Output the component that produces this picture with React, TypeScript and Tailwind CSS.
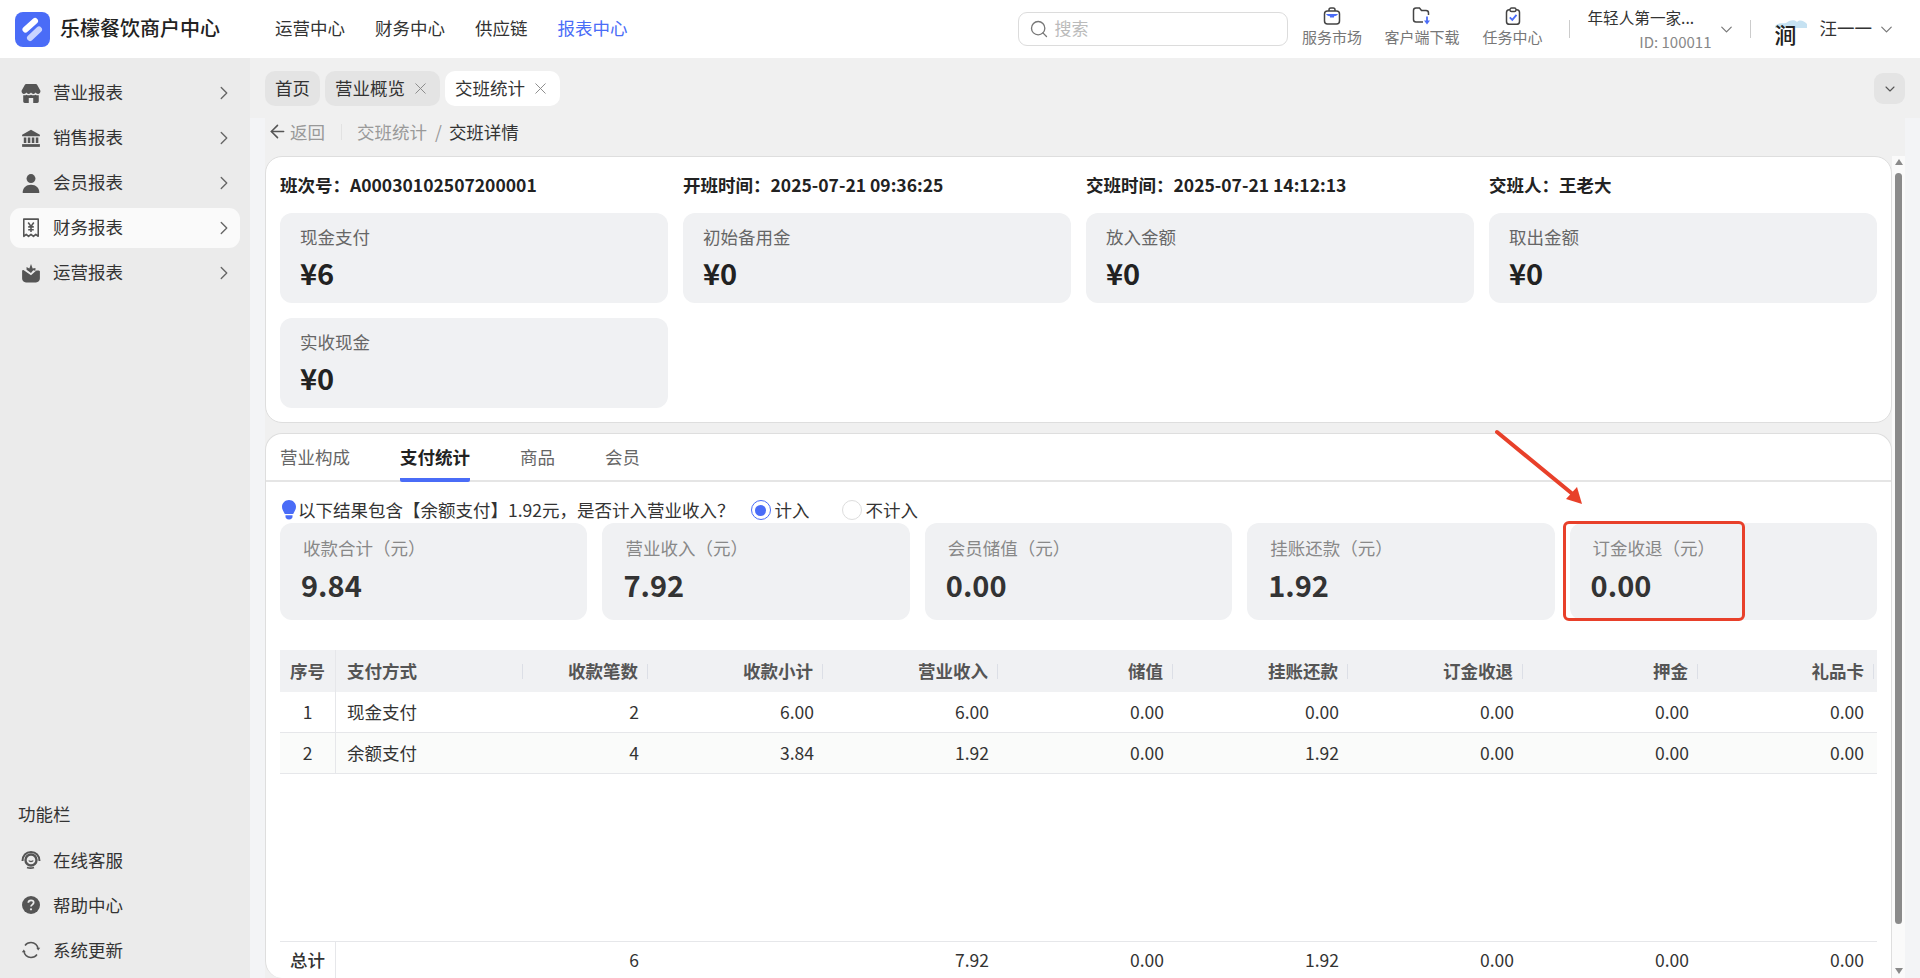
import { ArrowLeft, ChevronDown, ChevronRight, Search, X } from 'lucide-react';
import type { ReactNode } from 'react';

const BLUE = '#4a6cf7';

function Logo() {
  return (
    <svg viewBox="0 0 35 35" className="w-[35px] h-[35px]">
      <rect width="35" height="35" rx="8" fill={BLUE} />
      <path d="M15 26 L24 17.5" stroke="#c9d4ff" strokeWidth="6" strokeLinecap="round" />
      <path d="M10.5 17.5 L20 9" stroke="#fff" strokeWidth="6" strokeLinecap="round" />
    </svg>
  );
}

function StoreIcon() {
  return (
    <svg viewBox="0 0 18 18" className="w-[20px] h-[20px]" fill="#555">
      <path d="M5 1h8c1 0 1.6.5 2 1.4L17.5 7c.2 1.7-.9 2.8-2.2 2.8-1 0-1.7-.5-2.1-1.2-.5.7-1.2 1.2-2.1 1.2S9.500 9.300 9 8.600c-.5.7-1.2 1.2-2.1 1.2S5.300 9.300 4.800 8.600c-.4.7-1.1 1.2-2.1 1.2C1.400 9.800.3 8.700.5 7L3 2.400C3.400 1.500 4 1 5 1z" />
      <path d="M2 11c1.200.3 2.300 0 3-.5.9.6 2.800.7 4 0 1.200.7 3.100.6 4 0 .7.5 1.800.8 3 .5v5.500c0 .8-.6 1.500-1.400 1.500H3.400C2.600 18 2 17.300 2 16.500V11zm5 2.500V18h4v-4.500H7z" fillRule="evenodd" />
    </svg>
  );
}

function BankIcon() {
  return (
    <svg viewBox="0 0 18 18" className="w-[20px] h-[20px]" fill="#555">
      <path d="M9 1.5 17 6v1.500H1V6l8-4.500z" />
      <path d="M2.500 8.500h2.300v5H2.500zM6.100 8.500h2.300v5H6.100zM9.700 8.500h2.300v5H9.700zM13.300 8.500h2.300v5h-2.300z" />
      <path d="M1 14.500h16V17H1z" />
    </svg>
  );
}

function UserIcon() {
  return (
    <svg viewBox="0 0 18 18" className="w-[20px] h-[20px]" fill="#555">
      <circle cx="9" cy="5" r="4" />
      <path d="M1.500 17.500c0-4 3-7 7.500-7s7.500 3 7.500 7c0 .3-.2.5-.5.5H2c-.3 0-.5-.2-.5-.5z" />
    </svg>
  );
}

function ReceiptIcon() {
  return (
    <svg viewBox="0 0 18 18" className="w-[20px] h-[20px]" fill="none" stroke="#555" strokeWidth="1.4">
      <path d="M2.500 1h13v15.500l-2.200-1.800-2.100 1.800L9 14.700l-2.200 1.800-2.100-1.800-2.200 1.800V1z" strokeLinejoin="round" />
      <path d="M6.500 4 9 7.500 11.500 4M9 7.500V12.500M6.500 8h5M6.500 10.500h5" />
    </svg>
  );
}

function BoxIcon() {
  return (
    <svg viewBox="0 0 18 18" className="w-[20px] h-[20px]" fill="#555">
      <path d="M9 1 7.500 5 5 3.500V6l4 3 2-2.500 2 .5V4.500L10.500 5 9 1z" />
      <path d="M1 7.500c0-.8.7-1.300 1.500-1L9 11l4.500-4c.8-.5 3.500-.5 3.500.5V14c0 2-1.500 3.500-3.500 3.500h-9C2.500 17.500 1 16 1 14V7.500z" />
    </svg>
  );
}

function ServiceIcon() {
  return (
    <svg viewBox="0 0 20 20" className="w-[20px] h-[20px]" fill="none" stroke="#555">
      <path d="M1.500 11C1.500 5.500 5 2 10 2s8.500 3.500 8.500 9" strokeWidth="2" />
      <circle cx="10" cy="10" r="5.5" strokeWidth="2.4" />
      <path d="M7.800 10.500c.8 1.300 3.600 1.300 4.400 0" strokeWidth="1.3" />
      <path d="M6 17.500c2 .8 5 .8 7 0" strokeWidth="1.8" />
    </svg>
  );
}

function HelpIcon() {
  return (
    <svg viewBox="0 0 20 20" className="w-[20px] h-[20px]">
      <circle cx="10" cy="10" r="9" fill="#555" />
      <path d="M7.300 7.800C7.400 6.200 8.500 5.300 10 5.300c1.600 0 2.700 1 2.700 2.300 0 2-2.700 2-2.700 4" fill="none" stroke="#ebebeb" strokeWidth="1.7" />
      <circle cx="10" cy="14.3" r="1.1" fill="#ebebeb" />
    </svg>
  );
}

function RefreshIcon() {
  return (
    <svg viewBox="0 0 20 20" className="w-[20px] h-[20px]" fill="none" stroke="#555" strokeWidth="1.4">
      <path d="M4 5.500C5.500 3.300 7.500 2.500 10 2.500c3.800 0 6.800 2.800 7.200 6.500" />
      <path d="M16 14.500c-1.500 2.200-3.500 3-6 3-3.800 0-6.800-2.800-7.200-6.500" />
      <path d="M15.200 7.800h4l-2 2.600zM.8 12.200h4l-2-2.600z" fill="#555" stroke="none" />
    </svg>
  );
}

function MarketIcon() {
  return (
    <svg viewBox="0 0 18 18" className="w-[18px] h-[18px]" fill="none">
      <rect x="1.5" y="4" width="15" height="13" rx="3" stroke="#444" strokeWidth="1.5" />
      <path d="M6 4V2.800C6 1.800 6.800 1 7.800 1h2.400c1 0 1.800.8 1.800 1.800V4" stroke="#444" strokeWidth="1.5" />
      <path d="M3 7h12c-.5 1-2 2-4 2.300V10.500H7V9.300C5 9 3.500 8 3 7z" fill={BLUE} />
    </svg>
  );
}

function DownloadIcon() {
  return (
    <svg viewBox="0 0 20 18" className="w-[20px] h-[18px]" fill="none">
      <path d="M11 15H4c-1.400 0-2.500-1-2.500-2.500v-9C1.500 2 2.500 1 4 1h3.500l2 2.500H14c1.400 0 2.500 1 2.500 2.500v2" stroke="#444" strokeWidth="1.5" />
      <path d="M15 9.500V15" stroke={BLUE} strokeWidth="1.8" />
      <path d="M12 13.500h6L15 17.500z" fill={BLUE} />
    </svg>
  );
}

function TaskIcon() {
  return (
    <svg viewBox="0 0 18 18" className="w-[18px] h-[18px]" fill="none">
      <rect x="2.5" y="2.8" width="13" height="14.500" rx="2.8" stroke="#444" strokeWidth="1.5" />
      <rect x="6" y="1" width="6" height="3.5" rx="1.5" fill="#fff" stroke="#444" strokeWidth="1.4" />
      <path d="M5.800 10.300 8.300 12.800 12.500 7.800" stroke={BLUE} strokeWidth="1.8" />
    </svg>
  );
}

function Bulb() {
  return (
    <svg viewBox="0 0 14 20" className="w-[14px] h-[20px]" fill={BLUE}>
      <path d="M7 0c3.700 0 7 2.800 7 6.800 0 3-1.700 4.700-2.800 7.200H2.800C1.700 11.500 0 9.800 0 6.800 0 2.800 3.300 0 7 0z" />
      <path d="M3.500 15.300h7v1.500c0 1.300-1 2.700-3.500 2.700S3.500 18.100 3.500 16.800z" />
    </svg>
  );
}

const topTools = [
  { icon: <MarketIcon />, label: '服务市场', cls: 'ml-[14px] w-[61px]' },
  { icon: <DownloadIcon />, label: '客户端下载', cls: 'ml-[22px] w-[75px]' },
  { icon: <TaskIcon />, label: '任务中心', cls: 'ml-[23px] w-[60px]' },
];

const menu = [
  { icon: <StoreIcon />, label: '营业报表' },
  { icon: <BankIcon />, label: '销售报表' },
  { icon: <UserIcon />, label: '会员报表' },
  { icon: <ReceiptIcon />, label: '财务报表', active: true },
  { icon: <BoxIcon />, label: '运营报表' },
];

const tools = [
  { icon: <ServiceIcon />, label: '在线客服' },
  { icon: <HelpIcon />, label: '帮助中心' },
  { icon: <RefreshIcon />, label: '系统更新' },
];

function Header() {
  return (
    <header className="h-[58px] shrink-0 bg-white flex items-center pl-[15px] pr-[24px]">
      <Logo />
      <span className="ml-[10px] mb-[2px] text-[20px] font-medium text-[#222] whitespace-nowrap">乐檬餐饮商户中心</span>
      <nav className="ml-[55px] mb-[2px] flex gap-[30px] text-[17.5px] text-[#333]">
        <span>运营中心</span>
        <span>财务中心</span>
        <span>供应链</span>
        <span className="text-[#4a6cf7]">报表中心</span>
      </nav>
      <div className="ml-auto flex items-center">
        <div className="w-[270px] h-[34px] rounded-[9px] border border-[#dcdcdc] flex items-center pl-[10px] gap-[6px]">
          <Search size={20} strokeWidth={1.6} className="text-[#777]" />
          <span className="mb-[2px] text-[17px] text-[#bbb]">搜索</span>
        </div>
        {topTools.map(t => (
          <div key={t.label} className={`${t.cls} mb-[5px] flex flex-col items-center`}>
            <div className="h-[20px] flex items-center">{t.icon}</div>
            <span className="text-[15px] leading-[22px] text-[#777] whitespace-nowrap">{t.label}</span>
          </div>
        ))}
        <div className="ml-[26px] w-px h-[18px] bg-[#ccc]" />
        <div className="ml-[18px] w-[124px] flex flex-col">
          <span className="text-[15.6px] leading-[22px] text-[#333] whitespace-nowrap">年轻人第一家...</span>
          <span className="mt-[3px] text-[15px] leading-[22px] text-[#888] text-right">ID: 100011</span>
        </div>
        <ChevronDown size={19} strokeWidth={1.5} className="ml-[5px] text-[#777]" />
        <div className="ml-[14px] w-px h-[18px] bg-[#ccc]" />
        <div className="ml-[21px] w-[38px] h-[38px] rounded-full relative flex items-end pl-[3px] pb-[3px]">
          <svg viewBox="0 0 38 12" className="absolute left-0 top-[7px] w-[38px] h-[12px]">
            <path d="M3 9c3-4 8-2 11-3 3-3 9-4 11-1 3-3 7-1 10 2v4H3z" fill="#c6e2f2" />
          </svg>
          <span className="relative text-[22px] leading-[24px] font-medium text-[#222]">涧</span>
        </div>
        <span className="ml-[10px] mb-[2px] text-[17.5px] text-[#333] whitespace-nowrap">汪一一</span>
        <ChevronDown size={19} strokeWidth={1.5} className="ml-[5px] text-[#777]" />
      </div>
    </header>
  );
}

function Sidebar() {
  return (
    <aside className="w-[250px] shrink-0 bg-[#ebebeb] flex flex-col justify-between pt-[15px] pb-[8px] text-[17.5px] text-[#333]">
      <div className="flex flex-col gap-[5px] px-[10px]">
        {menu.map(m => (
          <div key={m.label} className={`h-[40px] rounded-[11px] flex items-center pl-[11px] pr-[5px] ${m.active ? 'bg-[#fafafa]' : ''}`}>
            <span className="w-[20px] flex justify-center">{m.icon}</span>
            <span className="ml-[12px] mb-[2px]">{m.label}</span>
            <ChevronRight size={22} strokeWidth={1.5} className="ml-auto text-[#666]" />
          </div>
        ))}
      </div>
      <div className="px-[18px]">
        <div className="h-[32px] leading-[32px]">功能栏</div>
        <div className="mt-[10px] flex flex-col gap-[5px]">
          {tools.map(t => (
            <div key={t.label} className="h-[40px] flex items-center">
              <span className="ml-[3px]">{t.icon}</span>
              <span className="ml-[12px]">{t.label}</span>
            </div>
          ))}
        </div>
      </div>
    </aside>
  );
}

function Tab({ label, active, closable }: { label: string; active?: boolean; closable?: boolean }) {
  return (
    <div className={`h-[35px] rounded-[10px] px-[10px] flex items-center gap-[6px] text-[17.5px] text-[#333] ${active ? 'bg-white' : 'bg-[#e4e4e4]'}`}>
      {label}
      {closable && <X size={19} strokeWidth={1.2} className="text-[#888]" />}
    </div>
  );
}

function InfoCard({ label, value }: { label: string; value: string }) {
  return (
    <div className="h-[90px] rounded-[12px] bg-[#f0f1f3] pl-[20px] pt-[12px]">
      <div className="text-[17.5px] leading-[24px] text-[#666]">{label}</div>
      <div className="mt-[5px] text-[29px] leading-[36px] font-bold text-[#222]">{value}</div>
    </div>
  );
}

function PayCard({ label, value }: { label: string; value: string }) {
  return (
    <div className="h-[97px] rounded-[12px] bg-[#f0f1f3] pt-[13px]">
      <div className="ml-[23px] text-[17.5px] leading-[24px] text-[#888] whitespace-nowrap">{label}</div>
      <div className="ml-[21px] mt-[6px] text-[29px] leading-[36px] font-bold text-[#333]">{value}</div>
    </div>
  );
}

function Radio({ label, checked }: { label: string; checked?: boolean }) {
  return (
    <div className="flex items-center gap-[4px]">
      <span className={`w-[20px] h-[20px] rounded-full border flex items-center justify-center ${checked ? 'border-[#4a6cf7]' : 'border-[#ddd]'}`}>
        {checked && <span className="w-[11px] h-[11px] rounded-full bg-[#4a6cf7]" />}
      </span>
      {label}
    </div>
  );
}

const gridCols = 'grid grid-cols-[56px_187px_125px_repeat(6,175px)_179px]';
const headers = ['收款笔数', '收款小计', '营业收入', '储值', '挂账还款', '订金收退', '押金', '礼品卡'];

function HeadCell({ children, last, left }: { children: ReactNode; last?: boolean; left?: boolean }) {
  return (
    <div className={`flex items-center ${left ? 'justify-between pl-[11px]' : 'justify-end'} ${last ? 'pr-[3px]' : ''}`}>
      <span className="font-bold text-[#555]">{children}</span>
      <span className={`${left ? '' : 'ml-[9px]'} w-px h-[15px] bg-[#dcdfe6]`} />
    </div>
  );
}

function Row({ index, name, cells, cls }: { index: string; name: string; cells: string[]; cls?: string }) {
  return (
    <div className={`${gridCols} ${cls ?? ''} h-[41px] border-b border-[#e6e7ea] text-[17.5px] text-[#333]`}>
      <div className="flex items-center justify-center border-r border-[#e6e7ea]">{index}</div>
      <div className="flex items-center pl-[11px]">{name}</div>
      {cells.map((c, i) => (
        <div key={i} className={`flex items-center justify-end ${i === cells.length - 1 ? 'pr-[13px]' : 'pr-[9px]'}`}>{c}</div>
      ))}
    </div>
  );
}

function PayTable() {
  return (
    <div className="mt-[30px] flex-1 min-h-0 flex flex-col">
      <div className={`${gridCols} h-[42px] shrink-0 bg-[#f0f1f3] text-[17.5px]`}>
        <div className="flex items-center justify-center font-bold text-[#555] border-r border-[#e6e7ea]">序号</div>
        <HeadCell left>支付方式</HeadCell>
        {headers.map((h, i) => (
          <HeadCell key={h} last={i === headers.length - 1}>{h}</HeadCell>
        ))}
      </div>
      <Row index="1" name="现金支付" cells={['2', '6.00', '6.00', '0.00', '0.00', '0.00', '0.00', '0.00']} />
      <Row index="2" name="余额支付" cells={['4', '3.84', '1.92', '0.00', '1.92', '0.00', '0.00', '0.00']} cls="bg-[#fafbfa]" />
      <div className="flex-1" />
      <div className={`${gridCols} h-[37px] shrink-0 border-t border-[#e6e7ea] text-[17.5px] text-[#333]`}>
        <div className="flex items-center justify-center font-medium border-r border-[#e6e7ea]">总计</div>
        <div />
        {['6', '', '7.92', '0.00', '1.92', '0.00', '0.00', '0.00'].map((c, i) => (
          <div key={i} className={`flex items-center justify-end ${i === 7 ? 'pr-[13px]' : 'pr-[9px]'}`}>{c}</div>
        ))}
      </div>
    </div>
  );
}

function Scrollbar() {
  return (
    <div className="w-[13px] shrink-0 bg-[#fafafa] relative flex flex-col items-center">
      <span className="mt-[3px] w-0 h-0 border-x-[4px] border-x-transparent border-b-[6px] border-b-[#8a8a8a]" />
      <div className="mt-[8px] w-[7px] h-[751px] rounded-[4px] bg-[#8a8a8a]" />
      <span className="mt-auto mb-[4px] w-0 h-0 border-x-[4px] border-x-transparent border-t-[6px] border-t-[#8a8a8a]" />
    </div>
  );
}

function Overlay() {
  return (
    <>
      <svg viewBox="0 0 100 85" className="absolute left-[1490px] top-[425px] w-[100px] h-[85px]">
        <path d="M7 7 L85 71" stroke="#e8402a" strokeWidth="4" strokeLinecap="round" />
        <path d="M92 79 L76 74 L87 62z" fill="#e8402a" />
      </svg>
      <div className="absolute left-[1563px] top-[521px] w-[182px] h-[100px] border-[3.5px] border-[#e8402a] rounded-[6px]" />
    </>
  );
}

export default function App() {
  return (
    <div className="relative w-[1920px] h-[978px] overflow-hidden flex flex-col bg-[#f0f0f0] font-['Noto_Sans_CJK_SC','Microsoft_YaHei',sans-serif]">
      <Header />
      <div className="flex flex-1 min-h-0">
        <Sidebar />
        <main className="flex-1 min-w-0 flex flex-col bg-[#f3f4f6]">
          <div className="h-[60px] shrink-0 bg-[#f0f0f0] px-[15px] pt-[13px] flex items-start gap-[5px]">
            <Tab label="首页" />
            <Tab label="营业概览" closable />
            <Tab label="交班统计" closable active />
            <div className="ml-auto w-[31px] h-[31px] mt-[2px] rounded-[9px] bg-[#e4e4e4] flex items-center justify-center">
              <ChevronDown size={16} strokeWidth={1.6} className="text-[#555]" />
            </div>
          </div>
          <div className="flex-1 min-h-0 mx-[15px] flex flex-col bg-[#f0f0f0]">
            <div className="h-[38px] shrink-0 flex items-start text-[17.5px] leading-[28px] pl-[2px]">
              <ArrowLeft size={21} strokeWidth={1.8} className="mt-[3px] text-[#555]" />
              <span className="ml-[2px] text-[#999]">返回</span>
              <span className="ml-[16px] mt-[6px] w-px h-[16px] bg-[#e2e2e2]" />
              <span className="ml-[15px] text-[#999]">交班统计</span>
              <span className="ml-[8px] text-[#999]">/</span>
              <span className="ml-[7px] text-[#333]">交班详情</span>
            </div>
            <div className="flex-1 min-h-0 flex">
              <div className="flex-1 min-w-0 flex flex-col gap-[10px]">
                <section className="h-[267px] shrink-0 bg-white border border-[#dedede] rounded-[17px] px-[14px] pt-[14px]">
                  <div className="grid grid-cols-4 gap-x-[15px] text-[17.5px] leading-[28px] font-bold text-[#222]">
                    <div>班次号：A00030102507200001</div>
                    <div>开班时间：2025-07-21 09:36:25</div>
                    <div>交班时间：2025-07-21 14:12:13</div>
                    <div>交班人：王老大</div>
                  </div>
                  <div className="mt-[14px] grid grid-cols-4 gap-[15px]">
                    <InfoCard label="现金支付" value="¥6" />
                    <InfoCard label="初始备用金" value="¥0" />
                    <InfoCard label="放入金额" value="¥0" />
                    <InfoCard label="取出金额" value="¥0" />
                    <InfoCard label="实收现金" value="¥0" />
                  </div>
                </section>
                <section className="flex-1 min-h-0 bg-white border-x border-t border-[#dedede] rounded-t-[17px] rounded-bl-[17px] flex flex-col">
                  <div className="h-[48px] shrink-0 border-b-2 border-[#e5e5e5] flex gap-[50px] pl-[14px] text-[17.5px] text-[#666]">
                    <span className="h-[48px] leading-[46px]">营业构成</span>
                    <span className="h-[48px] leading-[46px] font-bold text-[#222] border-b-[4px] border-[#4a6cf7] rounded-b-[2px]">支付统计</span>
                    <span className="h-[48px] leading-[46px]">商品</span>
                    <span className="h-[48px] leading-[46px]">会员</span>
                  </div>
                  <div className="flex-1 min-h-0 px-[14px] flex flex-col">
                    <div className="mt-[15px] h-[26px] shrink-0 flex items-center text-[17.5px] text-[#333]">
                      <span className="ml-[2px]"><Bulb /></span>
                      <span className="ml-[2px] whitespace-nowrap">以下结果包含【余额支付】1.92元，是否计入营业收入？</span>
                      <div className="ml-[16px]"><Radio label="计入" checked /></div>
                      <div className="ml-[32px]"><Radio label="不计入" /></div>
                    </div>
                    <div className="grid grid-cols-5 gap-[15px] shrink-0">
                      <PayCard label="收款合计（元）" value="9.84" />
                      <PayCard label="营业收入（元）" value="7.92" />
                      <PayCard label="会员储值（元）" value="0.00" />
                      <PayCard label="挂账还款（元）" value="1.92" />
                      <PayCard label="订金收退（元）" value="0.00" />
                    </div>
                    <PayTable />
                  </div>
                </section>
              </div>
              <Scrollbar />
            </div>
          </div>
        </main>
      </div>
      <Overlay />
    </div>
  );
}
